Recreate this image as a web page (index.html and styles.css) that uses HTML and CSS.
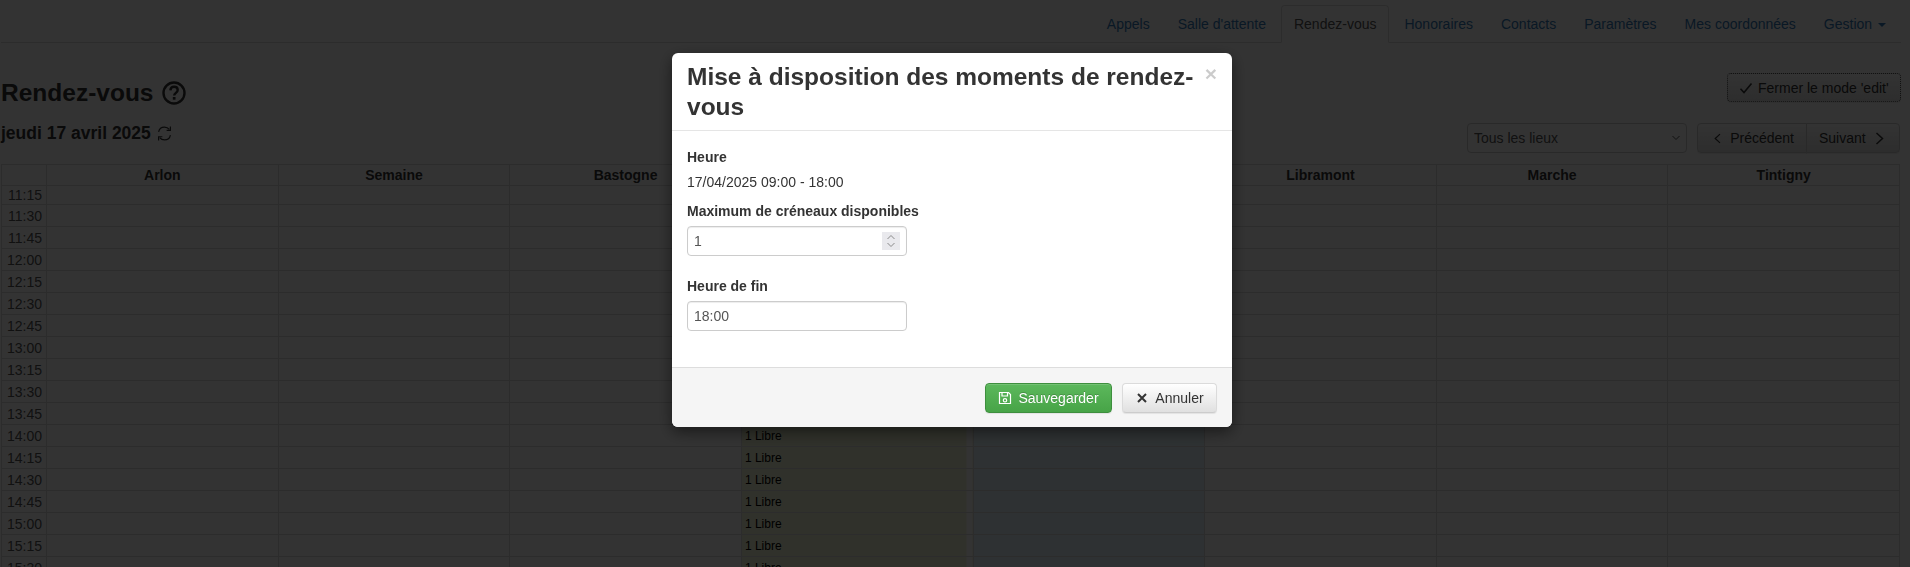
FILE: index.html
```html
<!DOCTYPE html>
<html lang="fr">
<head>
    <meta charset="UTF-8">
    <meta name="viewport" content="width=device-width, initial-scale=1">
    <title>Rendez-vous</title>
    <link rel="stylesheet" href="styles.css">
</head>
<body>
    <div class="page">
        <ul class="tabs">
            <li><a href="#">Appels</a></li>
            <li><a href="#">Salle d'attente</a></li>
            <li class="active"><a href="#">Rendez-vous</a></li>
            <li><a href="#">Honoraires</a></li>
            <li><a href="#">Contacts</a></li>
            <li><a href="#">Paramètres</a></li>
            <li><a href="#">Mes coordonnées</a></li>
            <li><a href="#">Gestion <span class="caret"></span></a></li>
        </ul>

        <div class="page-head">
            <h2>Rendez-vous
                <svg class="help-icon" viewBox="0 0 24 24"><circle cx="12" cy="12" r="10.500" fill="none" stroke="currentColor" stroke-width="2.400"/><path d="M8.400 9.400c.1-2.300 1.600-3.600 3.700-3.600s3.600 1.300 3.600 3.200c0 2.800-3.500 2.900-3.500 5.600" fill="none" stroke="currentColor" stroke-width="2.400"/><rect x="10.800" y="16" width="2.700" height="2.700" fill="currentColor"/></svg>
            </h2>
            <button class="btn btn-edit" type="button">
                <svg class="icon" viewBox="0 0 14 14"><path d="M1.500 7.800 5 11.500 12.500 2.500" fill="none" stroke="currentColor" stroke-width="1.600"/></svg>
                Fermer le mode 'edit'
            </button>
        </div>

        <div class="toolbar">
            <h4>jeudi 17 avril 2025
                <svg class="refresh-icon" viewBox="1 1 14 14"><path d="M2.500 6.500C3 3.800 5.200 2 8 2c1.900 0 3.400.8 4.500 2.200M13.500 9.500C13 12.200 10.800 14 8 14c-1.900 0-3.400-.8-4.500-2.200" fill="none" stroke="currentColor" stroke-width="1.100"/><path d="M13.500 1.500v3.500H10M2.500 14.500V11H6" fill="none" stroke="currentColor" stroke-width="1.100"/></svg>
            </h4>
            <div class="toolbar-right">
                <select class="place-select">
                    <option>Tous les lieux</option>
                </select>
                <div class="btn-group">
                    <button class="btn btn-prev" type="button">
                        <svg class="chevron" viewBox="0 0 9 13"><path d="M7.500 1 1.500 6.500l6 5.500" fill="none" stroke="currentColor" stroke-width="1.500"/></svg>
                        Précédent
                    </button>
                    <button class="btn btn-next" type="button">
                        Suivant
                        <svg class="chevron" viewBox="0 0 9 13"><path d="M1.500 1l6 5.500-6 5.500" fill="none" stroke="currentColor" stroke-width="1.500"/></svg>
                    </button>
                </div>
            </div>
        </div>

        <table class="agenda">
            <thead>
                <tr><th></th><th>Arlon</th><th>Semaine</th><th>Bastogne</th><th></th><th></th><th>Libramont</th><th>Marche</th><th>Tintigny</th></tr>
            </thead>
            <tbody>
                <tr class="short"><td class="time">11:15</td><td></td><td></td><td></td><td class="open"></td><td class="other"></td><td></td><td></td><td></td></tr>
                <tr><td class="time">11:30</td><td></td><td></td><td></td><td class="open"></td><td class="other"></td><td></td><td></td><td></td></tr>
                <tr><td class="time">11:45</td><td></td><td></td><td></td><td class="open"></td><td class="other"></td><td></td><td></td><td></td></tr>
                <tr><td class="time">12:00</td><td></td><td></td><td></td><td class="open"></td><td class="other"></td><td></td><td></td><td></td></tr>
                <tr><td class="time">12:15</td><td></td><td></td><td></td><td class="open"></td><td class="other"></td><td></td><td></td><td></td></tr>
                <tr><td class="time">12:30</td><td></td><td></td><td></td><td class="open"></td><td class="other"></td><td></td><td></td><td></td></tr>
                <tr><td class="time">12:45</td><td></td><td></td><td></td><td class="open"></td><td class="other"></td><td></td><td></td><td></td></tr>
                <tr><td class="time">13:00</td><td></td><td></td><td></td><td class="open"></td><td class="other"></td><td></td><td></td><td></td></tr>
                <tr><td class="time">13:15</td><td></td><td></td><td></td><td class="open"></td><td class="other"></td><td></td><td></td><td></td></tr>
                <tr><td class="time">13:30</td><td></td><td></td><td></td><td class="open"></td><td class="other"></td><td></td><td></td><td></td></tr>
                <tr><td class="time">13:45</td><td></td><td></td><td></td><td class="open"></td><td class="other"></td><td></td><td></td><td></td></tr>
                <tr><td class="time">14:00</td><td></td><td></td><td></td><td class="open">1 Libre</td><td class="other"></td><td></td><td></td><td></td></tr>
                <tr><td class="time">14:15</td><td></td><td></td><td></td><td class="open">1 Libre</td><td class="other"></td><td></td><td></td><td></td></tr>
                <tr><td class="time">14:30</td><td></td><td></td><td></td><td class="open">1 Libre</td><td class="other"></td><td></td><td></td><td></td></tr>
                <tr><td class="time">14:45</td><td></td><td></td><td></td><td class="open">1 Libre</td><td class="other"></td><td></td><td></td><td></td></tr>
                <tr><td class="time">15:00</td><td></td><td></td><td></td><td class="open">1 Libre</td><td class="other"></td><td></td><td></td><td></td></tr>
                <tr><td class="time">15:15</td><td></td><td></td><td></td><td class="open">1 Libre</td><td class="other"></td><td></td><td></td><td></td></tr>
                <tr><td class="time">15:30</td><td></td><td></td><td></td><td class="open">1 Libre</td><td class="other"></td><td></td><td></td><td></td></tr>
            </tbody>
        </table>
    </div>

    <div class="backdrop"></div>

    <div class="modal-layer">
        <div class="modal">
            <div class="modal-header">
                <h3>Mise à disposition des moments de rendez-vous</h3>
                <span class="close">&times;</span>
            </div>
            <form class="modal-body">
                <label>Heure</label>
                <p class="static-value">17/04/2025 09:00 - 18:00</p>
                <label for="maxSlots">Maximum de créneaux disponibles</label>
                <div class="number-field">
                    <input class="field" type="text" id="maxSlots" value="1">
                    <span class="spinner">
                        <svg viewBox="0 0 18 18"><path d="M5.500 7 9 3.500 12.500 7M5.500 11 9 14.500 12.500 11" fill="none" stroke="#8a8a8a" stroke-width="1"/></svg>
                    </span>
                </div>
                <label for="endTime">Heure de fin</label>
                <input class="field" type="text" id="endTime" value="18:00">
            </form>
            <div class="modal-footer">
                <button class="btn btn-save" type="button">
                    <svg class="icon" viewBox="0 0 14 14"><path d="M1.500 1.500h9l2 2v9h-11z" fill="none" stroke="currentColor" stroke-width="1.200"/><path d="M4 1.500v3.500h5.500V1.500" fill="none" stroke="currentColor" stroke-width="1.200"/><circle cx="7" cy="9.300" r="1.700" fill="none" stroke="currentColor" stroke-width="1.200"/></svg>
                    Sauvegarder
                </button>
                <button class="btn btn-cancel" type="button">
                    <svg class="icon" viewBox="0 0 14 14"><path d="M3 3l8 8M11 3l-8 8" fill="none" stroke="currentColor" stroke-width="2"/></svg>
                    Annuler
                </button>
            </div>
        </div>
    </div>
</body>
</html>
```

FILE: styles.css
```css
* { box-sizing: border-box; }
html, body { height: 100%; }
body { margin: 0; overflow: hidden; background: #fff; color: #333; font-family: "Liberation Sans", Arial, sans-serif; font-size: 14px; line-height: 20px; }
.page { padding: 0 9px 0 1px; }

.tabs { display: flex; justify-content: flex-end; height: 43px; margin: 0; padding: 5px 0 0; list-style: none; border-bottom: 1px solid #ddd; }
.tabs li { margin-right: 2px; margin-bottom: -1px; }
.tabs a { display: block; height: 38px; padding: 8px 12px; border: 1px solid transparent; border-radius: 4px 4px 0 0; color: #337ab7; text-decoration: none; }
.tabs .active a { border-color: #ddd #ddd #fff; background: #fff; color: #555; }
.caret { display: inline-block; width: 0; height: 0; margin-left: 2px; vertical-align: middle; border-top: 4px solid; border-left: 4px solid transparent; border-right: 4px solid transparent; }

.page-head { display: flex; justify-content: space-between; align-items: flex-start; height: 80px; padding-top: 30px; }
.page-head h2 { display: flex; align-items: center; gap: 9px; margin: 5px 0 0; font-size: 24.5px; line-height: 30px; font-weight: bold; }
.help-icon { width: 24px; height: 24px; }

.toolbar { display: flex; justify-content: space-between; align-items: flex-start; height: 41px; margin-right: 1px; }
.toolbar h4 { display: flex; align-items: center; gap: 6px; margin: 0; font-size: 17.5px; line-height: 20px; font-weight: bold; }
.refresh-icon { width: 15px; height: 15px; }
.toolbar-right { display: flex; gap: 10px; }
.place-select { width: 220px; height: 30px; padding: 4px 6px; border: 1px solid #ccc; border-radius: 4px; background: #fff url("data:image/svg+xml,%3Csvg xmlns='http://www.w3.org/2000/svg' width='8' height='6'%3E%3Cpath d='M.5 1 4 4.500 7.500 1' fill='none' stroke='%23555'/%3E%3C/svg%3E") no-repeat right 6px center; color: #555; font: inherit; appearance: none; }

.btn { display: inline-flex; align-items: center; justify-content: center; gap: 6px; height: 30px; padding: 0 12px; border: 1px solid #ccc; border-radius: 4px; background: linear-gradient(#fff, #e0e0e0); color: #333; font: inherit; box-shadow: inset 0 1px 0 rgba(255,255,255,.15), 0 1px 1px rgba(0,0,0,.075); }
.btn-edit { justify-content: flex-start; gap: 5px; width: 174px; height: 29px; padding: 0 0 0 11px; border: 1px dotted #555; }
.btn-group { display: flex; }
.btn-group .btn { justify-content: flex-start; gap: 9px; }
.btn-group .btn-prev { width: 110px; padding-left: 16px; border-radius: 4px 0 0 4px; }
.btn-group .btn-next { width: 94px; margin-left: -1px; padding-left: 12px; border-radius: 0 4px 4px 0; }
.icon { width: 14px; height: 14px; }
.chevron { width: 9px; height: 13px; }

.agenda { width: 1899px; table-layout: fixed; border-collapse: collapse; }
.agenda th, .agenda td { border: 1px solid #ddd; padding: 0; }
.agenda th { height: 21px; font-weight: bold; text-align: center; }
.agenda th:first-child { width: 45px; }
.agenda td { height: 22px; line-height: 18px; }
.agenda .short td { height: 19px; }
.agenda .time { padding-right: 4px; color: #555; text-align: right; }
.agenda .open { padding-left: 3px; background: linear-gradient(to right, #f0f5d5 calc(100% - 6px), #fff calc(100% - 6px)); color: #000; font-size: 12px; }
.other { background: #e6f6fc; }

.backdrop { position: fixed; inset: 0; background: rgba(0,0,0,.8); }
.modal-layer { position: fixed; top: 53px; left: 0; right: 6px; display: flex; justify-content: center; }
.modal { width: 560px; height: 374px; display: flex; flex-direction: column; border-radius: 6px; background: #fff; box-shadow: 0 5px 15px rgba(0,0,0,.5); }
.modal-header { display: flex; align-items: flex-start; height: 78px; padding: 9px 15px 0; border-bottom: 1px solid #e5e5e5; }
.modal-header h3 { flex: 1; margin: 0; font-size: 24.5px; line-height: 30px; font-weight: bold; }
.close { margin: 0 0 0 6px; color: #000; font-size: 21px; line-height: 24px; font-weight: bold; opacity: .2; }
.modal-body { flex: 1; padding: 16px 15px 0; }
.modal-body label { display: block; font-weight: bold; line-height: 20px; }
.static-value { margin: 5px 0 0; height: 29px; }
.field { display: block; width: 220px; height: 30px; margin: 5px 0 0; padding: 4px 6px; border: 1px solid #ccc; border-radius: 4px; color: #555; font: inherit; box-shadow: inset 0 1px 1px rgba(0,0,0,.075); }
.number-field { position: relative; width: 220px; margin-bottom: 20px; }
.spinner { position: absolute; top: 6px; right: 7px; display: block; width: 18px; height: 18px; background: #e9e9ed; }
.spinner svg { display: block; width: 18px; height: 18px; }
.modal-footer { display: flex; justify-content: flex-end; gap: 10px; height: 60px; padding: 15px; border-top: 1px solid #ddd; border-radius: 0 0 6px 6px; background: #f5f5f5; }
.btn-save { width: 127px; border-color: #3e8f3e; background: linear-gradient(#5cb85c, #47a447); color: #fff; text-shadow: 0 -1px 0 rgba(0,0,0,.2); }
.btn-cancel { width: 95px; border-color: #dbdbdb #dbdbdb #ccc; }
```
